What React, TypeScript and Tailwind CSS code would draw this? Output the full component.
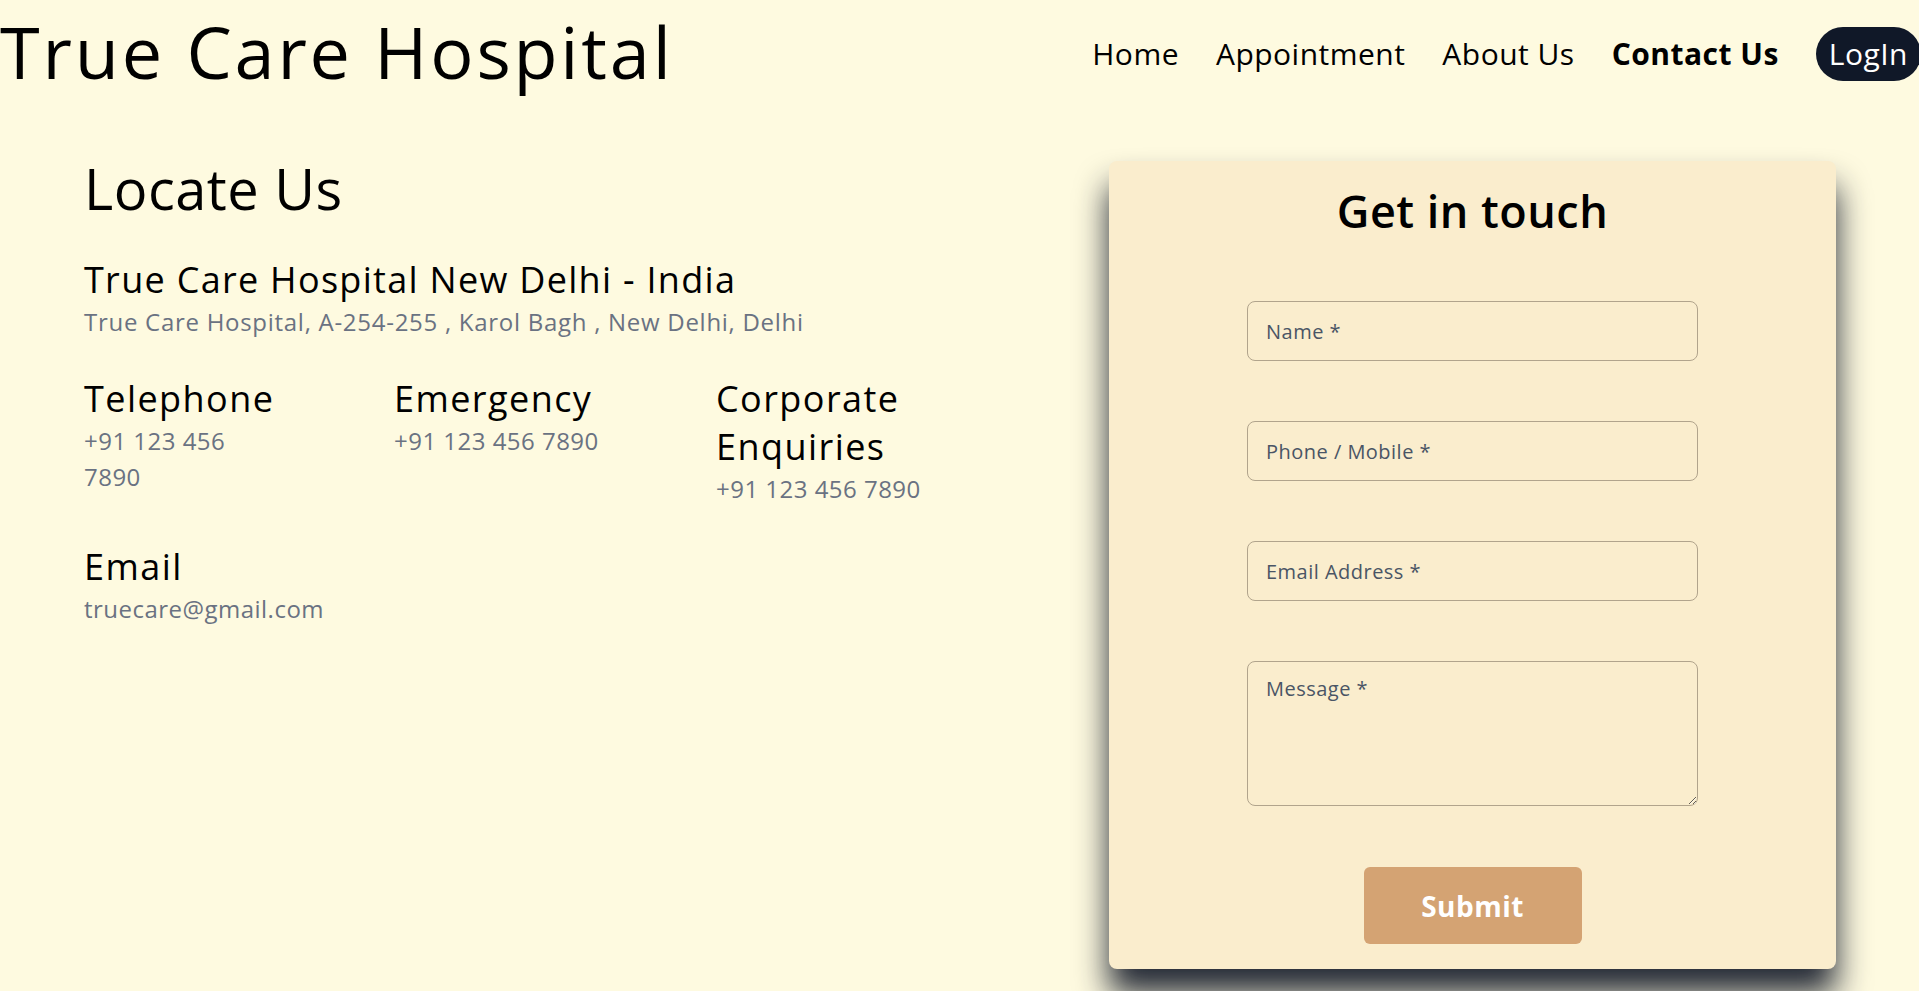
import React from 'react';

const NavLink: React.FC<{ label: string; active?: boolean }> = ({ label, active }) => (
  <a href="#" className={`text-3xl leading-9 text-black ${active ? 'font-bold' : ''}`}>
    {label}
  </a>
);

const InfoBlock: React.FC<{ title: React.ReactNode; value: string; width: string }> = ({ title, value, width }) => (
  <div className={width}>
    <h3 className="text-4xl leading-[48px] tracking-[0.04em] text-black">{title}</h3>
    <p className="text-2xl leading-9 text-gray-500">{value}</p>
  </div>
);

export default function App() {
  return (
    <div className="min-h-screen overflow-hidden bg-[#fefae0] font-['Open_Sans','Noto_Sans',sans-serif] tracking-[0.03em] text-black">
      {/* Header */}
      <header className="flex h-[108px] items-center justify-between">
        <h1 className="-mt-[6px] whitespace-nowrap text-7xl leading-none tracking-[0.039em]">True Care Hospital</h1>
        <nav className="flex items-center gap-[37px]">
          <NavLink label="Home" />
          <NavLink label="Appointment" />
          <NavLink label="About Us" />
          <NavLink label="Contact Us" active />
          <button className="-mr-[2px] rounded-full bg-gray-900 px-[13px] py-[9px] text-3xl leading-9 text-white">
            LogIn
          </button>
        </nav>
      </header>

      {/* Main */}
      <main className="flex items-start justify-between pl-[84px] pr-[83px]">
        {/* Locate us */}
        <section className="pt-[47px]">
          <h2 className="text-[56px] leading-[67px]">Locate Us</h2>
          <div className="mt-[34px]">
            <h3 className="text-4xl leading-[48px] tracking-[0.036em]">True Care Hospital New Delhi - India</h3>
            <p className="text-2xl leading-9 tracking-[0.03em] text-gray-500">
              True Care Hospital, A-254-255 , Karol Bagh , New Delhi, Delhi
            </p>
          </div>

          <div className="mt-[35px] flex">
            <div className="w-[310px]">
              <InfoBlock title="Telephone" value="+91 123 456 7890" width="max-w-[195px]" />
            </div>
            <div className="w-[322px]">
              <InfoBlock title="Emergency" value="+91 123 456 7890" width="w-auto" />
            </div>
            <div className="w-[240px]">
              <InfoBlock title="Corporate Enquiries" value="+91 123 456 7890" width="w-auto" />
            </div>
          </div>

          <div className="mt-[36px]">
            <InfoBlock title="Email" value="truecare@gmail.com" width="w-auto" />
          </div>
        </section>

        {/* Contact form */}
        <form
          className="mt-[53px] flex w-[727px] flex-col items-center rounded-lg bg-[#faedcd] pt-[23px] pb-[25px] shadow-[0_25px_32px_rgba(17,24,39,0.92)]"
          onSubmit={(e) => e.preventDefault()}
        >
          <h2 className="text-[45px] font-semibold leading-[54px]">Get in touch</h2>
          <div className="mt-[63px] flex w-[451px] flex-col gap-[60px]">
            <input
              type="text"
              placeholder="Name *"
              className="h-[60px] rounded-lg border border-[#b1a48c] bg-transparent px-[18px] text-xl placeholder:text-gray-600 outline-none"
            />
            <input
              type="text"
              placeholder="Phone / Mobile *"
              className="h-[60px] rounded-lg border border-[#b1a48c] bg-transparent px-[18px] text-xl placeholder:text-gray-600 outline-none"
            />
            <input
              type="email"
              placeholder="Email Address *"
              className="h-[60px] rounded-lg border border-[#b1a48c] bg-transparent px-[18px] text-xl placeholder:text-gray-600 outline-none"
            />
            <textarea
              placeholder="Message *"
              className="h-[145px] rounded-lg border border-[#b1a48c] bg-transparent px-[18px] py-3 text-xl leading-[30px] placeholder:text-gray-600 outline-none"
            />
          </div>
          <button
            type="submit"
            className="mt-[61px] h-[77px] w-[218px] rounded-md bg-[#d4a373] text-[28px] font-bold text-white"
          >
            Submit
          </button>
        </form>
      </main>
    </div>
  );
}
